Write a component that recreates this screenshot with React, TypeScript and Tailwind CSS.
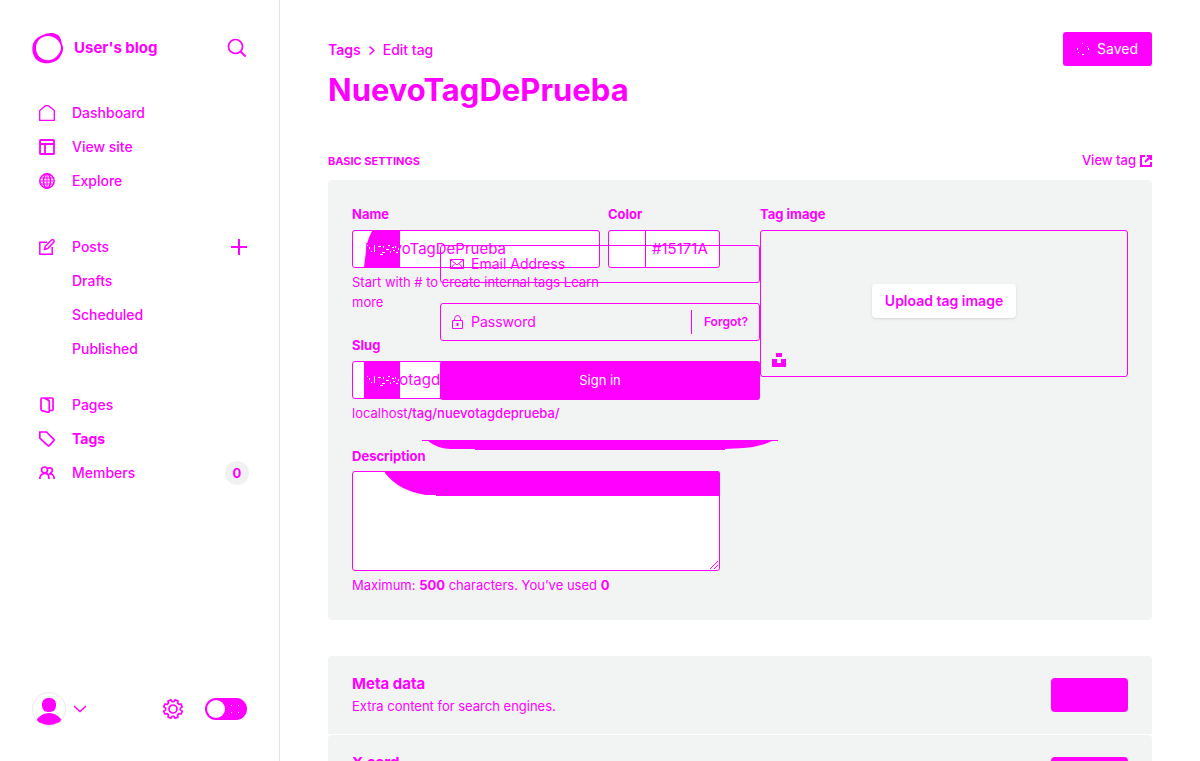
import type { ReactNode } from "react";

function Icon({ children, size = 16, box = 16, w = 1.5 }: { children: ReactNode; size?: number; box?: number; w?: number }) {
  return (
    <svg width={size} height={size} viewBox={`0 0 ${box} ${box}`} fill="none" stroke="currentColor" strokeWidth={w} className="shrink-0" aria-hidden="true">
      {children}
    </svg>
  );
}

const icons = {
  home: <Icon w={1.3}><path d="M.7 5.500v9.800h14.600V5.500L9.600.9Q8 0 6.400.9z" /></Icon>,
  site: <Icon w={1.8}><rect x="1" y="1" width="14" height="14" rx=".6" /><path d="M1 5h14M6 5v10" /></Icon>,
  globe: <Icon w={1.5}><circle cx="8" cy="8" r="7.2" /><ellipse cx="8" cy="8" rx="3.500" ry="7.200" /><path d="M1.500 5h13M.7 8h14.600M1.500 11h13M8 .7v14.600" strokeWidth="1.100" /></Icon>,
  posts: <Icon w={1.5}><path d="M8 3.300H.8v12h12.400V8" /><path d="m5.500 10.500.8-3.200L12.500 1q1-.8 2 0t.4 2L8.700 9.500z" /></Icon>,
  pages: <Icon w={1.7}><path d="M9.500 1H2.800Q2 1 2 2v10.500q0 1 1 1.200l6 1.500q1.300.1 1.300-1V4.500q0-1-1-1.400L5 1h8q1 0 1 1v10.500q0 1-1 1h-2.500" /></Icon>,
  tag: <Icon w={1.7}><path d="M.8 1h6.700l7.300 7.300q.5.7 0 1.300l-4.400 5q-.7.6-1.500 0L.8 7.200z" /></Icon>,
  members: <Icon w={1.7}><circle cx="5.500" cy="5" r="3" /><path d="M.8 14q0-5 4.700-5.500T10 14M9 3.600a2.500 2.500 0 1 1 2 4.200M10 9q5-.5 5.200 5" /></Icon>,
};

/* Eight rounded teeth round a centre at 11,11. */
const gearPoints = Array.from({ length: 8 }, (_, k) =>
  [[-7, 7.4], [7, 7.4], [13, 9.5], [32, 9.5]].map(([offset, radius]) => {
    const angle = ((k * 45 + offset) * Math.PI) / 180;
    return `${(11 + radius * Math.cos(angle)).toFixed(2)},${(11 + radius * Math.sin(angle)).toFixed(2)}`;
  }).join(" "),
).join(" ");

function NavRow({ icon, label, active, extra }: { icon?: ReactNode; label: string; active?: boolean; extra?: ReactNode }) {
  return (
    <li className="flex h-[34px] items-center justify-between">
      <a href="#" className={active ? "flex items-center gap-[17px] font-bold" : "flex items-center gap-[17px] font-medium"}>
        <span className="w-4">{icon}</span>
        {label}
      </a>
      {extra}
    </li>
  );
}

function Sidebar() {
  return (
    <aside className="flex w-[280px] shrink-0 flex-col border-r border-[#e1e5e8] p-8 text-sm">
      <div className="flex h-8 items-center">
        <svg width="32" height="32" viewBox="0 0 32 32" aria-hidden="true">
          <path fill="currentColor" fillRule="evenodd" d="M1 12C3 7 7 4 11 3 15 .5 22 0 26 3c3 3 3 5 4 9 2 4 1 8-1 11-2 5-6 7-11 8C11 32.500 4 29 2 24 0 20 0 16 1 12zm3 4c0 7 5 12 11 12 4 1 8-2 10-4 3-3 4-6 4-9C28 8 22 4 16 4 9 4 4 9 4 16z" />
        </svg>
        <span className="ml-[10px] text-[15px] font-bold">User's blog</span>
        <button className="ml-auto" aria-label="Search">
          <Icon size={20} box={20} w={1.7}><circle cx="8.500" cy="8.500" r="7" /><path d="m13.500 13.500 5.200 5" strokeWidth="2" /></Icon>
        </button>
      </div>
      <nav className="mt-8 pl-[7px]">
        <ul>
          <NavRow icon={icons.home} label="Dashboard" />
          <NavRow icon={icons.site} label="View site" />
          <NavRow icon={icons.globe} label="Explore" />
        </ul>
        <ul className="mt-8">
          <NavRow icon={icons.posts} label="Posts" extra={<button aria-label="New post"><Icon w={2}><path d="M8 0v16M0 8h16" /></Icon></button>} />
          <NavRow label="Drafts" />
          <NavRow label="Scheduled" />
          <NavRow label="Published" />
        </ul>
        <ul className="mt-[22px]">
          <NavRow icon={icons.pages} label="Pages" />
          <NavRow icon={icons.tag} label="Tags" active />
          <NavRow
            icon={icons.members}
            label="Members"
            extra={<span className="-mr-0.5 flex size-6 items-center justify-center rounded-full bg-[#eff1f2] text-[13px] font-bold">0</span>}
          />
        </ul>
      </nav>
      <div className="mt-auto flex h-10 items-center">
        <button className="flex items-center gap-2" aria-label="Account">
          <svg width="34" height="34" viewBox="0 0 34 34" aria-hidden="true">
            <circle cx="17" cy="17" r="16.500" fill="#fff" stroke="#e8e8ee" />
            <rect x="10" y="6" width="14" height="14" rx="6" fill="currentColor" />
            <path d="M5 27q5-6 12-6t12 6q0 3-4 4-4 2-8 2t-8-2q-4-1-4-4z" fill="currentColor" />
          </svg>
          <svg width="12" height="8" viewBox="0 0 12 8" fill="none" stroke="currentColor" strokeWidth="1.400" aria-hidden="true"><path d="m0 1 6 5.500L12 1" /></svg>
        </button>
        <a href="#" aria-label="Settings" className="ml-auto">
          <Icon size={22} box={22} w={1.7}>
            <circle cx="11" cy="11" r="4" />
            <polygon points={gearPoints} strokeLinejoin="round" />
          </Icon>
        </a>
        <button role="switch" aria-checked="false" aria-label="Night shift" className="ml-[21px] flex h-[22px] w-[42px] items-center justify-between rounded-full bg-[#ff00ff] px-[2px]">
          <span className="size-[18px] rounded-full bg-white" />
          <svg width="18" height="10" viewBox="0 0 18 10" fill="#fff" aria-hidden="true"><path d="M4 1h1v1H4zM11 1h1v1h-1zM4 8h1v1H4zM11 8h1v1h-1z" /></svg>
        </button>
      </div>
    </aside>
  );
}

function InputFill({ slanted }: { slanted?: boolean }) {
  return (
    <svg className="pointer-events-none absolute inset-y-0 left-[11px] h-full" width="36" height="36" viewBox="0 0 36 36" aria-hidden="true">
      <path d={slanted ? "M8 0h28v36H0l2-16q0-8 6-20z" : "M0 0h36v36H0z"} fill="currentColor" />
      <path
        fill="#fff"
        d="M3 14h1v1H3zM5 16h1v2H5zM7 20h1v1H7zM10 14h1v7h-1zM14 15h3v1h-3zM18 21h3v1h-3zM19 15h1v2h-1zM22 18h3v1h-3zM24 14h2v1h-2zM26 20h1v2h-1zM28 16h2v1h-2zM29 19h2v1h-2zM31 15h1v2h-1zM32 21h2v1h-2zM34 17h1v2h-1zM16 23h3v1h-3z"
      />
    </svg>
  );
}

const label = "block h-5 text-[13px] leading-5 font-bold";
const field = "relative mt-[6px] flex h-[38px] items-center rounded-[3px] border border-[#ff00ff] bg-white";
const help = "mt-1 text-[13px] leading-5";

function BasicSettings() {
  return (
    <section className="flex gap-10 rounded bg-[#f2f4f4] px-6 pt-6 pb-[25px]">
      <div className="min-w-0 flex-1">
        <div className="flex gap-2">
          <div className="min-w-0 flex-1">
            <label htmlFor="name" className={label}>Name</label>
            <div className={field}>
              <InputFill slanted />
              <input id="name" defaultValue="NuevoTagDePrueba" className="w-full min-w-0 bg-transparent px-3 text-[15px] outline-none" />
            </div>
            <p className={help}>Start with # to create internal tags <a href="#">Learn more</a></p>
          </div>
          <div className="w-28 shrink-0">
            <label htmlFor="color" className={label}>Color</label>
            <div className={field}>
              <span className="h-full w-[37px] shrink-0 border-r border-[#ff00ff]" />
              <span className="ml-[6px] text-[15px]">#</span>
              <input id="color" defaultValue="15171A" className="w-full min-w-0 bg-transparent text-[15px] outline-none" />
            </div>
          </div>
        </div>
        <label htmlFor="slug" className={`${label} mt-[23px]`}>Slug</label>
        <div className={field}>
          <InputFill />
          <input id="slug" defaultValue="nuevotagdeprueba" className="w-full min-w-0 bg-transparent px-3 text-[15px] outline-none" />
        </div>
        <p className={help}>localhost<b className="font-medium">/tag/nuevotagdeprueba/</b></p>
        <label htmlFor="description" className={`${label} mt-[23px]`}>Description</label>
        <div className="relative mt-[5px]">
          <textarea id="description" className="block h-[100px] w-full resize-none rounded-[3px] border border-[#ff00ff] bg-white px-3 py-2 text-[15px] outline-none" />
          <svg className="pointer-events-none absolute top-0 right-0" width="335" height="25" viewBox="0 0 335 25" aria-hidden="true">
            <path d="M0 0h333l2 2v23H51v-1H41Q14 20 0 2z" fill="currentColor" />
          </svg>
          <svg className="pointer-events-none absolute right-0.5 bottom-0.5" width="8" height="8" viewBox="0 0 8 8" stroke="currentColor" aria-hidden="true">
            <path d="M0 8 8 0M4 8l4-4" />
          </svg>
        </div>
        <p className={help}>Maximum: <b>500</b> characters. You’ve used <b>0</b></p>
      </div>
      <div className="min-w-0 flex-1">
        <span className={label}>Tag image</span>
        <div className="relative mt-[6px] flex h-[147px] items-center justify-center rounded-[3px] border border-[#ff00ff] pb-[6px]">
          <button className="h-[34px] w-36 rounded bg-white text-sm font-semibold shadow-sm">Upload tag image</button>
          <button aria-label="Unsplash" className="absolute bottom-[9px] left-[11px]">
            <svg width="14" height="14" viewBox="0 0 14 14" fill="currentColor"><path d="M4 0h6v4H4zM0 6h5v4h4V6h5v8H0z" /></svg>
          </button>
        </div>
      </div>
    </section>
  );
}

function ExpandRow({ title, text }: { title: string; text: string }) {
  return (
    <div className="flex items-center justify-between rounded-t bg-[#f2f4f4] px-6 py-[18px]">
      <div>
        <h4 className="text-[15px] leading-5 font-bold">{title}</h4>
        <p className="mt-0.5 text-[13px] leading-5">{text}</p>
      </div>
      <button aria-label={`Expand ${title}`} className="h-[34px] w-[77px] rounded bg-[#ff00ff]" />
    </div>
  );
}

function SignIn() {
  const box = "flex h-[38px] items-center rounded-[3px] border border-[#ff00ff] pl-[9px]";
  return (
    <div className="absolute inset-x-0 top-[245px] mx-auto w-80">
      <form className="flex flex-col gap-5">
        <label className={box}>
          <svg width="14" height="10" viewBox="0 0 14 10" fill="none" stroke="currentColor" aria-hidden="true"><path d="M.5.5h13v9H.5zL7 6 13.500.5M.5 9.500 5 4.500M13.500 9.500 9 4.500" /></svg>
          <input type="email" aria-label="Email Address" placeholder="Email Address" className="ml-[7px] min-w-0 flex-1 bg-transparent text-sm outline-none placeholder:text-[#ff00ff]" />
        </label>
        <div className={box}>
          <svg className="mx-0.5" width="11" height="14" viewBox="0 0 11 14" fill="none" stroke="currentColor" aria-hidden="true"><path d="M.5 5.500h10v8H.5zM2.500 5V3.500q.5-3 3-3t3 3V5" /><path d="M5.500 8v3" strokeWidth="2" /></svg>
          <input type="password" aria-label="Password" placeholder="Password" className="ml-[6px] min-w-0 flex-1 bg-transparent text-sm outline-none placeholder:text-[#ff00ff]" />
          <a href="#" className="flex h-6 items-center border-l border-[#ff00ff] pr-[11px] pl-3 text-xs font-semibold">Forgot?</a>
        </div>
        <button type="button" className="h-[39px] rounded-[3px] bg-[#ff00ff] text-[13px] text-white">Sign in</button>
      </form>
      <svg className="pointer-events-none mt-10 -ml-[18px]" width="356" height="10" viewBox="0 0 356 10" aria-hidden="true">
        <path d="M0 0h356v1h-6q-12 6-28 7l-19 1v1H53V9H28Q14 8 6 1H0z" fill="currentColor" />
      </svg>
    </div>
  );
}

export default function App() {
  return (
    <div className="relative flex h-screen overflow-hidden bg-white font-['Inter',sans-serif] text-[#ff00ff]">
      <Sidebar />
      <main className="min-w-0 flex-1 overflow-hidden px-12 pt-8">
        <header className="flex items-start justify-between">
          <div>
            <nav aria-label="Breadcrumb" className="flex h-9 items-center gap-2 text-sm font-medium">
              <a href="#" className="font-semibold">Tags</a>
              <svg width="6" height="9" viewBox="0 0 6 9" fill="none" stroke="currentColor" strokeWidth="1.500" aria-hidden="true"><path d="m.5.5 4.500 4-4.500 4" /></svg>
              <span>Edit tag</span>
            </nav>
            <h1 className="text-[31px] leading-[44px] font-bold">NuevoTagDePrueba</h1>
          </div>
          <button className="flex h-[34px] items-center gap-2 rounded-[3px] bg-[#ff00ff] px-[14px] text-sm text-white">
            <svg width="12" height="12" viewBox="0 0 12 12" fill="#fff" aria-hidden="true"><path d="M5 0h1v1H5zM10 3h1v1h-1zM0 5h1v2H0zM11 5h1v2h-1zM1 9h1v1H1zM5 11h2v1H5z" /></svg>
            Saved
          </button>
        </header>
        <div className="mt-[39px] mb-[9px] flex h-5 items-center justify-between">
          <h4 className="text-[11px] font-bold">BASIC SETTINGS</h4>
          <a href="#" className="flex items-center gap-1 text-[13px] font-medium">
            View tag
            <Icon size={12} box={12} w={2}><path d="M5 1H1v10h10V7M7 1h4v4M11 1 5 7" /></Icon>
          </a>
        </div>
        <BasicSettings />
        <section className="mt-9 flex flex-col gap-px">
          <ExpandRow title="Meta data" text="Extra content for search engines." />
          <ExpandRow title="X card" text="Customized structured data for X." />
        </section>
      </main>
      <SignIn />
    </div>
  );
}
